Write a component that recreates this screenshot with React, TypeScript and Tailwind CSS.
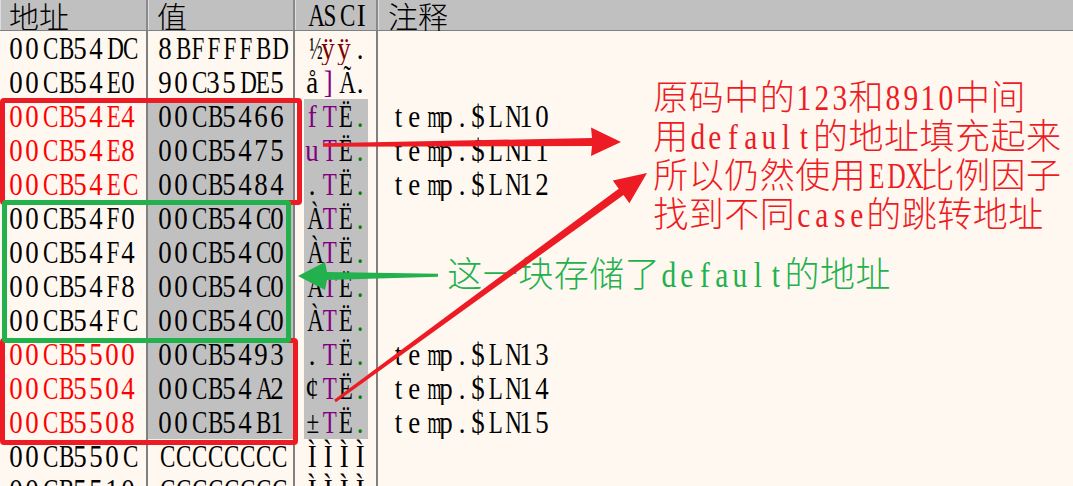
const CJK = /[\u3000-\u9fff\uff00-\uffef]/;

const COLORS: Record<string, string> = {
  k: 'text-black',
  r: 'text-[#800000]',
  p: 'text-[#800080]',
  g: 'text-[#008000]',
};

function scaleOf(ch: string) {
  if (ch === 'm' || ch === '½') return 'scale-x-[0.56]';
  if (/[A-HK-ZÀ-ËÑ-Ý±]/.test(ch)) return 'scale-x-[0.72]';
  return 'scale-x-[0.84]';
}

// each glyph sits in its own fixed cell, like the debugger's fixed-width font
function Mono({ text, colors, wide }: { text: string; colors?: string; wide?: boolean }) {
  return (
    <span className="inline-flex">
      {[...text].map((ch, i) => {
        const color = colors ? COLORS[colors[i]] : '';
        if (wide && CJK.test(ch)) {
          return (
            <span key={i} className="inline-block w-[35.5px] text-center font-light">
              {ch}
            </span>
          );
        }
        return (
          <span key={i} className={`inline-block text-center ${wide ? 'w-[17.75px]' : 'w-4'} ${color}`}>
            <span className={`inline-block ${scaleOf(ch)}`}>{ch}</span>
          </span>
        );
      })}
    </span>
  );
}

type Row = { addr: string; val: string; ascii: string; colors: string; note?: string; red?: boolean; sel?: boolean };

const rows: Row[] = [
  { addr: '00CB54DC', val: '8BFFFFBD', ascii: '½ÿÿ.', colors: 'krrk' },
  { addr: '00CB54E0', val: '90C35DE5', ascii: 'å]Ã.', colors: 'kpkk' },
  { addr: '00CB54E4', val: '00CB5466', ascii: 'fTË.', colors: 'ppkg', note: 'temp.$LN10', red: true, sel: true },
  { addr: '00CB54E8', val: '00CB5475', ascii: 'uTË.', colors: 'ppkg', note: 'temp.$LN11', red: true, sel: true },
  { addr: '00CB54EC', val: '00CB5484', ascii: '.TË.', colors: 'kpkg', note: 'temp.$LN12', red: true, sel: true },
  { addr: '00CB54F0', val: '00CB54C0', ascii: 'ÀTË.', colors: 'kpkg', sel: true },
  { addr: '00CB54F4', val: '00CB54C0', ascii: 'ÀTË.', colors: 'kpkg', sel: true },
  { addr: '00CB54F8', val: '00CB54C0', ascii: 'ÀTË.', colors: 'kpkg', sel: true },
  { addr: '00CB54FC', val: '00CB54C0', ascii: 'ÀTË.', colors: 'kpkg', sel: true },
  { addr: '00CB5500', val: '00CB5493', ascii: '.TË.', colors: 'kpkg', note: 'temp.$LN13', red: true, sel: true },
  { addr: '00CB5504', val: '00CB54A2', ascii: '¢TË.', colors: 'kpkg', note: 'temp.$LN14', red: true, sel: true },
  { addr: '00CB5508', val: '00CB54B1', ascii: '±TË.', colors: 'kpkg', note: 'temp.$LN15', red: true, sel: true },
  { addr: '00CB550C', val: 'CCCCCCCC', ascii: 'ÌÌÌÌ', colors: 'kkkk' },
  { addr: '00CB5510', val: 'CCCCCCCC', ascii: 'ÌÌÌÌ', colors: 'kkkk' },
];

const cjkFont = "font-['Noto_Sans_CJK_SC',sans-serif] font-light";

function Header() {
  const cell = 'h-full border-r-2 border-r-[#8a8a8a] border-l border-l-[#dedede] overflow-hidden';
  return (
    <div className="grid grid-cols-[148px_147px_83px_1fr] h-[31px] bg-[#c0c0c0] border-b border-[#808080] leading-[30px] whitespace-nowrap">
      <div className={`${cell} pl-2 text-[30px] ${cjkFont}`}>地址</div>
      <div className={`${cell} pl-[8px] text-[30px] ${cjkFont}`}>值</div>
      <div className={`${cell} pl-[9px] text-[32px]`}>
        <div className="w-[68px] overflow-hidden">
          <Mono text="ASCII" />
        </div>
      </div>
      <div className={`pl-[9px] text-[30px] border-l border-l-[#dedede] ${cjkFont}`}>注释</div>
    </div>
  );
}

function DataRow({ r }: { r: Row }) {
  return (
    <div className="grid grid-cols-[148px_147px_83px_1fr] h-[34px] leading-[34px] text-[32px] whitespace-nowrap">
      <div className={`pl-2 border-r-2 border-[#808080] overflow-hidden ${r.red ? 'text-[#ff0000]' : ''}`}>
        <Mono text={r.addr} />
      </div>
      <div className={`pl-[9px] border-r-2 border-[#808080] overflow-hidden ${r.sel ? 'bg-[#c0c0c0]' : ''}`}>
        <Mono text={r.val} />
      </div>
      <div className="flex pl-[9px] border-r-2 border-[#808080] overflow-hidden">
        <div className={`flex h-full ${r.sel ? 'bg-[#c0c0c0]' : ''}`}>
          <Mono text={r.ascii} colors={r.colors} />
        </div>
      </div>
      <div className="pl-3 overflow-hidden">{r.note && <Mono text={r.note} />}</div>
    </div>
  );
}

function Arrows() {
  return (
    <svg className="absolute inset-0 pointer-events-none" width="1073" height="486" viewBox="0 0 1073 486">
      <polygon fill="#22b14c" points="438,273.8 327,272 325,262 298,276 325,290 327,280 438,276.7" />
      <polygon fill="#ed1c24" points="323,143.3 592,138 591,127.5 621,142 591,156 592,146 323,146.7" />
      <polygon
        fill="#ed1c24"
        points="334.1,399.8 618.7,188.7 612.8,180.6 647,173 629.4,203.2 623.5,195.1 335.9,402.2"
      />
    </svg>
  );
}

export default function App() {
  return (
    <div className="relative w-[1073px] h-[486px] overflow-hidden bg-[#fff8f0] text-black font-['Liberation_Serif','Noto_Sans_CJK_SC',serif]">
      <Header />
      {rows.map((r) => (
        <DataRow key={r.addr} r={r} />
      ))}

      {/* hand-drawn markup boxes */}
      <div className="absolute left-0 top-[98px] w-[302px] h-[107px] border-[5px] border-[#ed1c24] rounded-[4px]" />
      <div className="absolute left-0 top-[338px] w-[298px] h-[107px] border-[5px] border-[#ed1c24] rounded-[4px]" />
      <div className="absolute left-[2px] top-[200px] w-[289px] h-[143px] border-[5px] border-[#22b14c] rounded-[4px]" />

      <div className="absolute left-[653px] top-[79px] text-[35px] leading-[39px] text-[#ed1c24] whitespace-nowrap">
        <div><Mono wide text="原码中的123和8910中间" /></div>
        <div><Mono wide text="用default的地址填充起来" /></div>
        <div><Mono wide text="所以仍然使用EDX比例因子" /></div>
        <div><Mono wide text="找到不同case的跳转地址" /></div>
      </div>
      <div className="absolute left-[447px] top-[256px] text-[35px] leading-[39px] text-[#22b14c] whitespace-nowrap">
        <Mono wide text="这一块存储了default的地址" />
      </div>

      <Arrows />
    </div>
  );
}
